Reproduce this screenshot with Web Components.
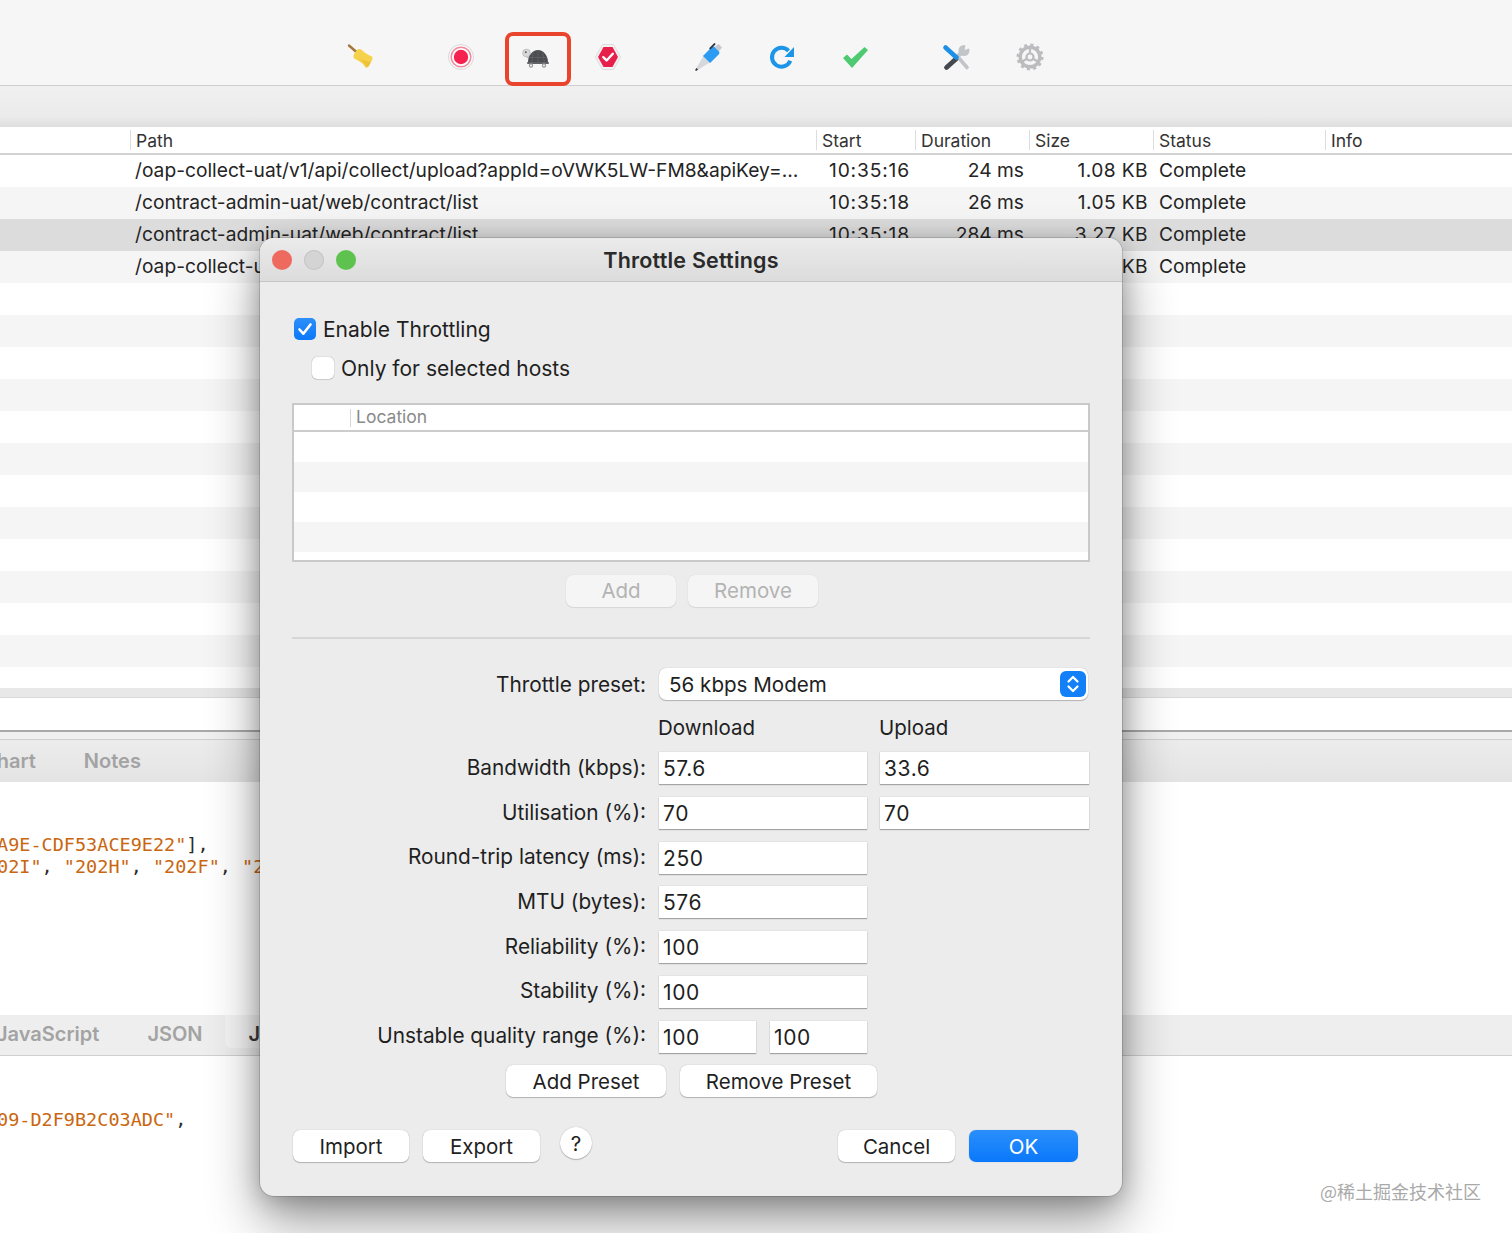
<!DOCTYPE html>
<html lang="en">
<head>
<meta charset="utf-8">
<title>Throttle Settings</title>
<style>
    html, body { margin: 0; height: 100%; background: #fff; }
    body { font-family: Inter, "Noto Sans", sans-serif; overflow: hidden; }
</style>
</head>
<body>
<app-window>
    <app-toolbar>
        <tool-icon name="broom" gap="346"></tool-icon>
        <tool-icon name="record" gap="70"></tool-icon>
        <tool-icon name="turtle" gap="46" marked></tool-icon>
        <tool-icon name="stop" gap="41"></tool-icon>
        <tool-icon name="pen" gap="71"></tool-icon>
        <tool-icon name="refresh" gap="43"></tool-icon>
        <tool-icon name="check" gap="43"></tool-icon>
        <tool-icon name="tools" gap="71"></tool-icon>
        <tool-icon name="gear" gap="44"></tool-icon>
    </app-toolbar>
    <session-table></session-table>
    <tab-band kind="top" offset="-18">
        <span>Chart</span>
        <span>Notes</span>
    </tab-band>
    <code-panel height="233" pad="52">
        <div><b>A9E-CDF53ACE9E22"</b>],</div>
        <div><b>02I"</b>, <b>"202H"</b>, <b>"202F"</b>, <b>"202G"</b>,</div>
    </code-panel>
    <tab-band kind="bottom" offset="-4">
        <span>JavaScript</span>
        <span>JSON</span>
        <span class="on">JSON Text</span>
    </tab-band>
    <code-panel height="178" pad="53">
        <div><b>09-D2F9B2C03ADC"</b>,</div>
    </code-panel>
    <throttle-dialog slot="overlay"></throttle-dialog>
    <water-mark slot="overlay">@稀土掘金技术社区</water-mark>
</app-window>

<script>
const ICONS = {
    broom: `<svg width="30" height="30" viewBox="0 0 30 30">
        <path d="M3 3.500l8 7" stroke="#a5763c" stroke-width="2.400" stroke-linecap="round"/>
        <path d="M11 8c2-2 4-1 6 1 3 3 6 4 9 5.500 1 1 .5 3-1 5.500l-3 5c-1 1-2 1-3 0-2-4-6-6-10-8-3-2-1-6 2-9z" fill="#f6d24c"/>
        <path d="M13 17c3 2 6 4 7 7 .8 1.300 1.500 1.300 2.500.5l2.500-4.500c-5-1-8-2-12-3z" fill="#edc238"/>
    </svg>`,
    record: `<svg width="30" height="30" viewBox="0 0 30 30">
        <circle cx="15" cy="15" r="12.500" fill="#f8f8f8" stroke="#d9d9d9"/>
        <circle cx="15" cy="15" r="9.800" fill="#fff" stroke="#f4869d" stroke-width="1.500"/>
        <circle cx="15" cy="15" r="7.200" fill="#f5224f"/>
    </svg>`,
    turtle: `<svg width="30" height="30" viewBox="0 0 30 30">
        <path d="M4 15l4 3 3-5z" fill="#c4c4c4"/>
        <circle cx="4.500" cy="11" r="3.900" fill="#d8d8d8" stroke="#b0b0b0" stroke-width=".6"/>
        <circle cx="3.800" cy="10.200" r=".9" fill="#555"/>
        <path d="M6 20.500c0-7 4.500-12.500 10-12.500s10 5.500 10 12.500z" fill="#4a4c50"/>
        <path d="M11.500 10l-2 10.500M16 8v12.500M20.500 10l2 10.500M7 15.500h18" stroke="#68696d" stroke-width=".6" fill="none"/>
        <rect x="5" y="20" width="22" height="2" rx="1" fill="#606266"/>
        <circle cx="9" cy="23.500" r="1.600" fill="none" stroke="#9a9a9a" stroke-width="1.200"/>
        <circle cx="22" cy="23.500" r="1.600" fill="none" stroke="#9a9a9a" stroke-width="1.200"/>
    </svg>`,
    stop: `<svg width="30" height="30" viewBox="0 0 30 30">
        <path d="M9.500 2.500h11l7 12.500-7 12.500h-11l-7-12.500z" fill="#f2f2f2" stroke="#dcdcdc"/>
        <path d="M10.500 5h9l5.500 10-5.500 10h-9L5 15z" fill="#e81f4b"/>
        <path d="M10.300 15.200l3.300 3.300 6.200-6.700" fill="none" stroke="#fff" stroke-width="2.400" stroke-linecap="round" stroke-linejoin="round"/>
    </svg>`,
    pen: `<svg width="30" height="30" viewBox="0 0 30 30">
        <g transform="translate(15 15) rotate(45)">
            <path d="M-1 18h2L4.500 3h-9z" fill="#d6d8dc"/>
            <path d="M-.7 19h1.400l.4-2.500h-2.200z" fill="#333"/>
            <path d="M-5 3.500V-9c0-1 1-2 2-2H3c1 0 2 1 2 2V3.500z" fill="#2c9bf3"/>
            <path d="M-3-11h6l-.5-5h-5z" fill="#c6cad0"/>
            <rect x="-6.200" y="-14" width="2" height="8" rx="1" fill="#333a44"/>
        </g>
    </svg>`,
    refresh: `<svg width="30" height="30" viewBox="0 0 30 30">
        <path d="M21.500 8.800a9.500 9.500 0 1 0 1.800 10" fill="none" stroke="#1c94e8" stroke-width="4"/>
        <path d="M17.500 15H27V5z" fill="#1c94e8"/>
    </svg>`,
    check: `<svg width="30" height="30" viewBox="0 0 30 30">
        <path d="M3 16l4-3.500 4.500 4.500L24.500 5l3.500 3-16 18z" fill="#4fc972"/>
    </svg>`,
    tools: `<svg width="30" height="30" viewBox="0 0 30 30">
        <path d="M17 15l9 10.500" stroke="#c2c4c8" stroke-width="3.600" stroke-linecap="round"/>
        <path d="M12 19l11-11" stroke="#c2c4c8" stroke-width="4"/>
        <circle cx="23" cy="8.500" r="5.500" fill="#c2c4c8"/>
        <path d="M23.500 8l1-5h5v3z" fill="#f6f6f6"/>
        <path d="M15 17L5.500 25.500" stroke="#44484f" stroke-width="4.800" stroke-linecap="round"/>
        <path d="M4.500 5.500L15.500 15.500" stroke="#1c8fe6" stroke-width="4.600" stroke-linecap="round"/>
    </svg>`,
    gear: `<svg width="30" height="30" viewBox="0 0 30 30">
        <circle cx="15" cy="15" r="9.800" fill="none" stroke="#bcbcbf" stroke-width="3.400"/>
        <circle cx="15" cy="15" r="12" fill="none" stroke="#bcbcbf" stroke-width="3" stroke-dasharray="3 3.283"/>
        <circle cx="15" cy="15" r="3.500" fill="none" stroke="#bcbcbf" stroke-width="2.200"/>
        <path d="M15 11V6M18.500 17l4.300 2.500M11.500 17l-4.300 2.500" stroke="#bcbcbf" stroke-width="2.200"/>
    </svg>`
};

class AppWindow extends HTMLElement {
    constructor() {
        super();
        this.attachShadow({ mode: 'open' });
        this.shadowRoot.innerHTML = `
            <style>
                :host { display: flex; flex-direction: column; position: relative; width: 1512px; height: 1233px; overflow: hidden; background: #fff; }
            </style>
            <slot></slot>
            <slot name="overlay"></slot>
        `;
    }
}

class AppToolbar extends HTMLElement {
    constructor() {
        super();
        this.attachShadow({ mode: 'open' });
        this.shadowRoot.innerHTML = `
            <style>
                :host { display: flex; align-items: center; flex: none; box-sizing: border-box; height: 86px; padding-top: 28px; background: #f6f6f6; border-bottom: 1px solid #cfcfcf; }
            </style>
            <slot></slot>
        `;
    }
}

class ToolIcon extends HTMLElement {
    constructor() {
        super();
        this.attachShadow({ mode: 'open' });
    }

    connectedCallback() {
        const marked = this.hasAttribute('marked');
        this.style.marginLeft = `${this.getAttribute('gap')}px`;
        this.shadowRoot.innerHTML = `
            <style>
                :host { display: block; position: relative; flex: none; width: 30px; height: 30px; }
                svg { display: block; }
                .mark { position: absolute; left: -17px; top: -10px; box-sizing: border-box; width: 66px; height: 54px; border: 4px solid #e8452c; border-radius: 8px; }
            </style>
            ${ICONS[this.getAttribute('name')]}
            ${marked ? '<div class="mark"></div>' : ''}
        `;
    }
}

const COLUMNS = '130px 686px 99px 114px 124px 172px 1fr';

class SessionTable extends HTMLElement {
    constructor() {
        super();
        this.attachShadow({ mode: 'open' });
    }

    connectedCallback() {
        const heads = ['', 'Path', 'Start', 'Duration', 'Size', 'Status', 'Info'];
        const upload = '/oap-collect-uat/v1/api/collect/upload?appId=oVWK5LW-FM8&amp;apiKey=…';
        const list = '/contract-admin-uat/web/contract/list';
        const rows = [
            [upload, '10:35:16', '24 ms', '1.08 KB'],
            [list, '10:35:18', '26 ms', '1.05 KB'],
            [list, '10:35:18', '284 ms', '3.27 KB'],
            [upload, '10:35:18', '31 ms', '1.08 KB']
        ];
        this.shadowRoot.innerHTML = `
            <style>
                :host { display: flex; flex-direction: column; flex: none; font-size: 18px; color: #242424; }
                .band { height: 41px; background: linear-gradient(#f0f0f0, #ebebeb 75%, #dedede); }
                .head, .row { display: grid; grid-template-columns: ${COLUMNS}; }
                .head { box-sizing: border-box; height: 28px; background: #fff; border-bottom: 2px solid #d2d2d2; font-size: 17.500px; color: #333; align-items: center; }
                .head span { box-sizing: border-box; height: 20px; line-height: 22px; padding-left: 5px; border-left: 1px solid #dddddd; }
                .head span:first-child { border: 0; }
                .list { height: 533px; overflow: hidden; background: repeating-linear-gradient(#fff 0 32px, #f5f5f5 32px 64px); }
                .row { height: 32px; line-height: 30px; font-size: 19.200px; white-space: nowrap; }
                .row.sel { background: #dcdcdc; }
                .path { grid-column: 2; padding-left: 5px; overflow: hidden; }
                .start { padding-left: 13px; letter-spacing: .85px; }
                .num { text-align: right; padding-right: 5px; }
                .size { letter-spacing: .4px; }
                .status { padding-left: 6px; }
                .bar { height: 9px; background: #e8e8e8; border-bottom: 1px solid #d9d9d9; }
                .blank { height: 32px; background: #fff; }
                .rule { height: 7px; background: #f0f0f0; border-top: 2px solid #a9a9a9; border-bottom: 1px solid #cfcfcf; }
            </style>
            <div class="band"></div>
            <div class="head">${heads.map(h => `<span>${h}</span>`).join('')}</div>
            <div class="list">
                ${rows.map((r, i) => `
                    <div class="row ${i === 2 ? 'sel' : ''}">
                        <span class="path">${r[0]}</span>
                        <span class="start">${r[1]}</span>
                        <span class="num">${r[2]}</span>
                        <span class="num size">${r[3]}</span>
                        <span class="status">Complete</span>
                    </div>`).join('')}
            </div>
            <div class="bar"></div>
            <div class="blank"></div>
            <div class="rule"></div>
        `;
    }
}

class TabBand extends HTMLElement {
    constructor() {
        super();
        this.attachShadow({ mode: 'open' });
    }

    connectedCallback() {
        const top = this.getAttribute('kind') === 'top';
        this.shadowRoot.innerHTML = `
            <style>
                :host { display: block; flex: none; box-sizing: border-box; overflow: hidden; white-space: nowrap;
                    height: ${top ? 42 : 41}px; line-height: ${top ? 43 : 39}px;
                    font-size: 20px; font-weight: 600; color: #a3a3a3; }
                :host([kind="top"]) { background: linear-gradient(#ececec, #e4e4e4); }
                :host([kind="bottom"]) { background: #eeeeee; border-bottom: 1px solid #d0d0d0; }
                .tabs { display: flex; gap: 48px; margin-left: ${this.getAttribute('offset')}px; }
                ::slotted(span.on) { margin-left: -26px; padding: 0 24px; height: 33px; background: #f5f5f5; border-radius: 0 0 0 6px; color: #3a3a3a; }
            </style>
            <div class="tabs"><slot></slot></div>
        `;
    }
}

class CodePanel extends HTMLElement {
    constructor() {
        super();
        this.attachShadow({ mode: 'open' });
    }

    connectedCallback() {
        this.shadowRoot.innerHTML = `
            <style>
                :host { display: block; flex: none; box-sizing: border-box; overflow: hidden; background: #fff;
                    height: ${this.getAttribute('height')}px; padding-top: ${this.getAttribute('pad')}px;
                    font: 18.500px/22.300px "DejaVu Sans Mono", monospace; color: #2b2b2b; }
                .lines { margin-left: -3px; }
                ::slotted(div) { height: 22.300px; white-space: pre; }
            </style>
            <div class="lines"><slot></slot></div>
        `;
        this.querySelectorAll('b').forEach(b => {
            b.style.fontWeight = 'normal';
            b.style.color = '#c9660f';
        });
    }
}

class MacButton extends HTMLElement {
    constructor() {
        super();
        this.attachShadow({ mode: 'open' });
        this.shadowRoot.innerHTML = `
            <style>
                :host { display: flex; align-items: center; justify-content: center; flex: none; box-sizing: border-box; height: 32px;
                    background: #fff; border-radius: 7px; color: #1f1f1f; font-size: 20.500px;
                    box-shadow: 0 0 1px rgba(0,0,0,.3), 0 1px 1px rgba(0,0,0,.22); }
                :host([disabled]) { padding-bottom: 1px; background: #f5f5f5; color: #b3b3b3; box-shadow: 0 0 1px rgba(0,0,0,.15), 0 1px 1px rgba(0,0,0,.08); }
                :host([primary]) { background: linear-gradient(#2a8ffb, #0a78fb); color: #fff; box-shadow: 0 0 1px rgba(0,60,160,.4); }
                :host([round]) { border-radius: 50%; }
            </style>
            <slot></slot>
        `;
    }
}

class MacCheck extends HTMLElement {
    constructor() {
        super();
        this.attachShadow({ mode: 'open' });
    }

    connectedCallback() {
        const checked = this.hasAttribute('checked');
        this.shadowRoot.innerHTML = `
            <style>
                :host { display: flex; align-items: center; gap: 7px; height: 22px; font-size: 21px; color: #1f1f1f; }
                .box { display: block; flex: none; box-sizing: border-box; width: 22px; height: 22px; border-radius: 5px; background: #fff; box-shadow: 0 0 1px rgba(0,0,0,.45), 0 1px 1px rgba(0,0,0,.1); }
                .box.on { background: linear-gradient(#2c8ffa, #0a78f8); box-shadow: none; }
            </style>
            ${checked
                ? '<svg class="box on" viewBox="0 0 22 22"><path d="M5.500 11.500l3.800 4.200 7.200-9.200" fill="none" stroke="#fff" stroke-width="2.600" stroke-linecap="round" stroke-linejoin="round"/></svg>'
                : '<span class="box"></span>'}
            <span><slot></slot></span>
        `;
    }
}

class TextField extends HTMLElement {
    constructor() {
        super();
        this.attachShadow({ mode: 'open' });
        this.shadowRoot.innerHTML = `
            <style>
                :host { display: block; box-sizing: border-box; height: 32px; padding-left: 4px; line-height: 34px; background: #fff;
                    font-size: 21px; letter-spacing: .6px; color: #1f1f1f; box-shadow: 0 0 1px rgba(0,0,0,.2), 0 1px 1px rgba(0,0,0,.28); }
            </style>
            <slot></slot>
        `;
    }
}

class LocationTable extends HTMLElement {
    constructor() {
        super();
        this.attachShadow({ mode: 'open' });
        this.shadowRoot.innerHTML = `
            <style>
                :host { display: block; box-sizing: border-box; height: 159px; overflow: hidden; border: 2px solid #c9c9c9; background: #fff; }
                .head { display: flex; align-items: center; box-sizing: border-box; height: 27px; padding-left: 56px; border-bottom: 2px solid #cccccc; }
                .head span { height: 18px; padding-left: 5px; line-height: 15px; border-left: 1px solid #d6d6d6; font-size: 17.500px; color: #8a8a8a; }
                .body { height: 128px; background: repeating-linear-gradient(#fff 0 30px, #f5f5f5 30px 60px); }
            </style>
            <div class="head"><span>Location</span></div>
            <div class="body"></div>
        `;
    }
}

class ThrottleDialog extends HTMLElement {
    constructor() {
        super();
        this.attachShadow({ mode: 'open' });
    }

    field(label, ...values) {
        const cells = values.map(v => `<text-field>${v}</text-field>`).join('');
        return `<label class="up">${label}</label>${cells}`;
    }

    connectedCallback() {
        this.shadowRoot.innerHTML = `
            <style>
                :host { display: flex; flex-direction: column; position: absolute; left: 260px; top: 238px; box-sizing: border-box; width: 862px; height: 958px;
                    background: #ececec; border-radius: 14px; overflow: visible; color: #1f1f1f;
                    box-shadow: 0 0 0 1px rgba(0,0,0,.14), 0 24px 52px rgba(0,0,0,.42), 0 4px 22px rgba(0,0,0,.2); }
                .title { display: flex; align-items: center; flex: none; position: relative; box-sizing: border-box; height: 44px; padding-left: 12px; gap: 12px;
                    background: linear-gradient(#ebebeb, #dcdcdc); border-bottom: 1px solid #c6c6c6; border-radius: 14px 14px 0 0; }
                .dot { width: 20px; height: 20px; border-radius: 50%; }
                .red { background: #ee6a5f; }
                .off { background: #d4d4d4; box-shadow: inset 0 0 0 1px #c6c6c6; }
                .green { background: #5ec24f; }
                .name { position: absolute; left: 100px; right: 100px; text-align: center; font-size: 21.500px; letter-spacing: .2px; font-weight: 600; color: #2a2a2a; line-height: 40px; }
                .body { display: flex; flex-direction: column; padding: 36px 32px 0; }
                .indent { margin: 17px 0 0 20px; }
                mac-check.first { margin-left: 2px; }
                location-table { margin-top: 24px; width: 798px; }
                .pair { display: flex; gap: 12px; margin: 13px 0 0 274px; }
                hr { width: 798px; height: 2px; margin: 30px 0 0; border: 0; background: #d6d6d6; }
                form { display: grid; grid-template-columns: 354px 208px 209px; column-gap: 13px; row-gap: 12.700px; margin-top: 29px; align-items: center; font-size: 20.800px; }
                label { text-align: right; white-space: nowrap; }
                label.up { padding-bottom: 2px; }
                .preset { grid-column: 2 / 4; display: flex; align-items: center; justify-content: space-between; box-sizing: border-box; height: 32px; width: 429px; padding: 0 2px 0 10px; background: #fff; border-radius: 7px; box-shadow: 0 0 1px rgba(0,0,0,.3), 0 1px 1px rgba(0,0,0,.22); font-size: 20.600px; }
                .preset svg { display: block; }
                .head { height: 27px; line-height: 29px; margin-left: -1px; font-size: 20.500px; }
                .split { display: flex; gap: 14px; }
                .split text-field { flex: 1; }
                .presets { display: flex; gap: 14px; margin: 12.700px 0 0 214px; }
                .foot { display: flex; align-items: flex-start; margin-top: 33px; }
            </style>
            <div class="title">
                <span class="dot red"></span><span class="dot off"></span><span class="dot green"></span>
                <span class="name">Throttle Settings</span>
            </div>
            <div class="body">
                <mac-check class="first" checked>Enable Throttling</mac-check>
                <mac-check class="indent">Only for selected hosts</mac-check>
                <location-table></location-table>
                <div class="pair">
                    <mac-button disabled style="width:110px">Add</mac-button>
                    <mac-button disabled style="width:130px">Remove</mac-button>
                </div>
                <hr>
                <form>
                    <label>Throttle preset:</label>
                    <div class="preset">
                        <span>56 kbps Modem</span>
                        <svg width="26" height="26" viewBox="0 0 26 26">
                            <rect width="26" height="26" rx="6" fill="#1380f8"/>
                            <path d="M8.500 10.500l4.500-4.500 4.500 4.500M8.500 15.500l4.500 4.500 4.500-4.500" fill="none" stroke="#fff" stroke-width="2.200" stroke-linecap="round" stroke-linejoin="round"/>
                        </svg>
                    </div>
                    <span></span>
                    <div class="head">Download</div>
                    <div class="head">Upload</div>
                    ${this.field('Bandwidth (kbps):', '57.6', '33.6')}
                    ${this.field('Utilisation (%):', '70', '70')}
                    ${this.field('Round-trip latency (ms):', '250')}<span></span>
                    ${this.field('MTU (bytes):', '576')}<span></span>
                    ${this.field('Reliability (%):', '100')}<span></span>
                    ${this.field('Stability (%):', '100')}<span></span>
                    <label class="up">Unstable quality range (%):</label>
                    <div class="split"><text-field>100</text-field><text-field>100</text-field></div>
                </form>
                <div class="presets">
                    <mac-button style="width:160px">Add Preset</mac-button>
                    <mac-button style="width:197px">Remove Preset</mac-button>
                </div>
                <div class="foot">
                    <mac-button style="width:116px;margin-left:1px">Import</mac-button>
                    <mac-button style="width:117px;margin-left:14px">Export</mac-button>
                    <mac-button round style="width:32px;margin:-3px 0 0 20px">?</mac-button>
                    <mac-button style="width:117px;margin-left:246px">Cancel</mac-button>
                    <mac-button primary style="width:109px;margin-left:14px">OK</mac-button>
                </div>
            </div>
        `;
    }
}

class WaterMark extends HTMLElement {
    constructor() {
        super();
        this.attachShadow({ mode: 'open' });
        this.shadowRoot.innerHTML = `
            <style>
                :host { position: absolute; right: 31px; top: 1179px; font: 18px/24px "Noto Sans CJK SC", sans-serif; color: #a9a9a9; }
            </style>
            <slot></slot>
        `;
    }
}

customElements.define('app-window', AppWindow);
customElements.define('app-toolbar', AppToolbar);
customElements.define('tool-icon', ToolIcon);
customElements.define('session-table', SessionTable);
customElements.define('tab-band', TabBand);
customElements.define('code-panel', CodePanel);
customElements.define('mac-button', MacButton);
customElements.define('mac-check', MacCheck);
customElements.define('text-field', TextField);
customElements.define('location-table', LocationTable);
customElements.define('throttle-dialog', ThrottleDialog);
customElements.define('water-mark', WaterMark);
</script>
</body>
</html>
